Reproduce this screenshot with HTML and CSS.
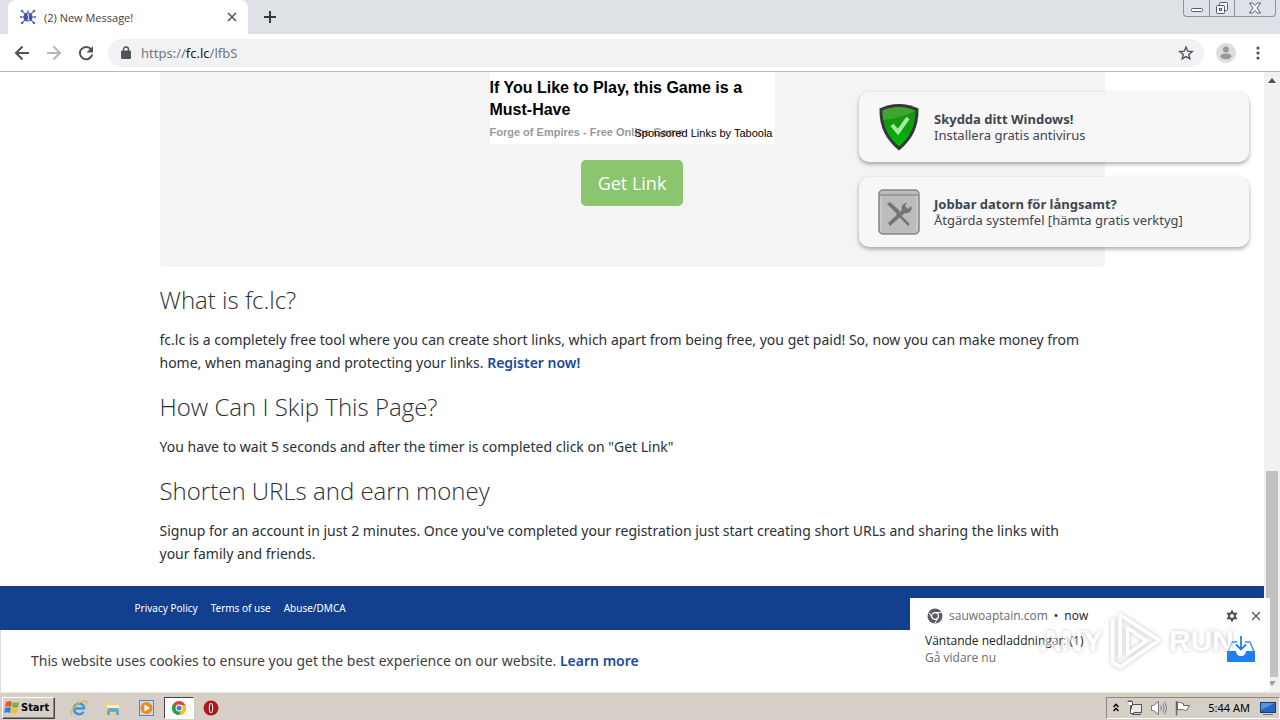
FILE: index.html
```html
<!DOCTYPE html>
<html lang="en">
<head>
  <meta charset="UTF-8">
  <title>(2) New Message!</title>
  <meta name="viewport" content="width=device-width, initial-scale=1.0">
  <link rel="stylesheet" href="styles.css">
</head>
<body>
  <header class="tab-strip">
    <div class="tab-edge"></div>
    <div class="tab">
      <svg class="favicon" width="16" height="16" viewBox="0 0 16 16">
        <g stroke="#6470b8" stroke-width="1.2"><path d="M8 8L2 2M8 8l6-6M8 8l-6 6M8 8l6 6M0 8h16M8 8V1"/></g>
        <circle cx="8" cy="8" r="4.6" fill="#4550a8"/>
        <g fill="#5a66b4"><circle cx="2" cy="2" r="1.3"/><circle cx="14" cy="2" r="1.3"/><circle cx="2" cy="14" r="1.3"/><circle cx="14" cy="14" r="1.3"/><circle cx="1" cy="8" r="1"/><circle cx="15" cy="8" r="1"/></g>
        <path d="M7 6l1.5-1v6M7 11h3" stroke="#c9cef0" stroke-width="1.2" fill="none"/>
      </svg>
      <span class="tab-title">(2) New Message!</span>
      <button class="icon-btn tab-close" aria-label="Close tab">
        <svg width="10" height="10" viewBox="0 0 10 10"><path d="M1 1l8 8M9 1l-8 8" stroke="#55595d" stroke-width="1.7"/></svg>
      </button>
    </div>
    <button class="icon-btn new-tab" aria-label="New tab">
      <svg width="12" height="12" viewBox="0 0 12 12"><path d="M6 0v12M0 6h12" stroke="#35383d" stroke-width="2"/></svg>
    </button>
    <div class="window-buttons">
      <button aria-label="Minimize">
        <svg width="14" height="14" viewBox="0 0 14 14"><rect x="1.5" y="7.5" width="11" height="3" rx="1" fill="#fff" stroke="#555a66"/></svg>
      </button>
      <button aria-label="Restore">
        <svg width="14" height="14" viewBox="0 0 14 14" fill="#f4f5f8" stroke="#555a66"><rect x="4.5" y="1.5" width="8" height="8" rx="1"/><rect x="1.5" y="4.5" width="8" height="8" rx="1"/><rect x="4.5" y="7.5" width="2" height="2"/></svg>
      </button>
      <button class="wide" aria-label="Close">
        <svg width="12" height="12" viewBox="0 0 12 12" fill="#fff" stroke="#555a66"><path d="M.5 1h3L6 3.6 8.5 1h3L8 6l3.5 5h-3L6 8.4 3.5 11h-3L4 6z"/></svg>
      </button>
    </div>
  </header>

  <nav class="toolbar">
    <button class="icon-btn" aria-label="Back">
      <svg width="16" height="16" viewBox="0 0 16 16" fill="none" stroke="#505357" stroke-width="2"><path d="M15 8H2M8.5 1.5L2 8l6.5 6.5"/></svg>
    </button>
    <button class="icon-btn" aria-label="Forward">
      <svg width="16" height="16" viewBox="0 0 16 16" fill="none" stroke="#b4b6b9" stroke-width="2"><path d="M1 8h13M7.5 1.5L14 8l-6.5 6.5"/></svg>
    </button>
    <button class="icon-btn" aria-label="Reload">
      <svg width="16" height="16" viewBox="0 0 16 16"><path d="M13.2 4.5A6.2 6.2 0 1 0 14.2 9.5" fill="none" stroke="#505357" stroke-width="2"/><path d="M15 1v6.5H8.5z" fill="#505357"/></svg>
    </button>
    <div class="omnibox">
      <svg width="10" height="13" viewBox="0 0 10 13"><rect y="4.5" width="10" height="8.5" rx="1.2" fill="#505357"/><path d="M2.5 5V3.5a2.5 2.5 0 0 1 5 0V5" fill="none" stroke="#505357" stroke-width="1.4"/></svg>
      <div class="url">https://<span>fc.lc</span>/lfbS</div>
      <button class="icon-btn" aria-label="Bookmark this page">
        <svg width="16" height="16" viewBox="0 0 16 16"><path d="M8 2l1.7 4.2 4.5.4-3.4 2.9 1 4.4L8 11.600l-3.800 2.300 1-4.400-3.400-2.900 4.500-.4z" fill="none" stroke="#505357" stroke-width="1.400"/></svg>
      </button>
    </div>
    <button class="icon-btn" aria-label="Profile">
      <svg width="20" height="20" viewBox="0 0 20 20"><circle cx="10" cy="10" r="10" fill="#dcdddf"/><circle cx="10" cy="6.5" r="3" fill="#96989b"/><path d="M4.5 14c0-3 3-3.500 5.500-3.500s5.500.5 5.500 3.500c-1.500 1.600-3.300 2.300-5.500 2.300S6 15.600 4.500 14z" fill="#96989b"/></svg>
    </button>
    <button class="icon-btn menu-btn" aria-label="Menu">
      <svg width="4" height="14" viewBox="0 0 4 14" fill="#505357"><circle cx="2" cy="2" r="1.6"/><circle cx="2" cy="7" r="1.6"/><circle cx="2" cy="12" r="1.6"/></svg>
    </button>
  </nav>

  <div class="viewport">
    <div class="page">
      <main class="content">
        <section class="link-box">
          <div class="ad">
            <h2>If You Like to Play, this Game is a Must-Have</h2>
            <div class="ad-source">Forge of Empires - Free Online Game</div>
            <div class="ad-sponsor">Sponsored Links by Taboola</div>
          </div>
          <button class="get-link">Get Link</button>
        </section>

        <h3>What is fc.lc?</h3>
        <p>fc.lc is a completely free tool where you can create short links, which apart from being free, you get paid! So, now you can make money from<br>home, when managing and protecting your links. <a href="#">Register now!</a></p>
        <h3>How Can I Skip This Page?</h3>
        <p>You have to wait 5 seconds and after the timer is completed click on "Get Link"</p>
        <h3>Shorten URLs and earn money</h3>
        <p>Signup for an account in just 2 minutes. Once you've completed your registration just start creating short URLs and sharing the links with<br>your family and friends.</p>
      </main>

      <footer class="footer">
        <div class="footer-links">
          <a href="#">Privacy Policy</a>
          <a href="#">Terms of use</a>
          <a href="#">Abuse/DMCA</a>
        </div>
      </footer>
      <div class="cookie-bar">This website uses cookies to ensure you get the best experience on our website. <a href="#">Learn more</a></div>
    </div>

    <div class="scrollbar">
      <svg width="8" height="5" viewBox="0 0 8 5"><path d="M0 5l4-5 4 5z" fill="#505050"/></svg>
      <div class="scroll-track"><div class="scroll-thumb"></div></div>
      <svg width="8" height="5" viewBox="0 0 8 5"><path d="M0 0l4 5 4-5z" fill="#a0a0a0"/></svg>
    </div>

    <div class="push-list">
      <div class="push">
        <svg width="42" height="48" viewBox="0 0 42 48">
          <defs>
            <linearGradient id="green" x1="0" y1="0" x2="0" y2="1"><stop offset="0" stop-color="#2b8a1c"/><stop offset=".5" stop-color="#0aa00a"/><stop offset="1" stop-color="#05b905"/></linearGradient>
          </defs>
          <path d="M21 1c7 0 14 2 19.5 4.500C41 24 34 37 21 47.500 8 37 1 24 1.500 5.500 7 3 14 1 21 1z" fill="#34383a"/>
          <path d="M21 4c6 0 12 1.500 16.500 3.500C37.500 23 32 34 21 43.500 10 34 4.500 23 4.500 7.500 9 5.500 15 4 21 4z" fill="url(#green)"/>
          <path d="M5 17C14 16 28 13 37 8 32 5 26 4 21 4 15 4 9 5.500 4.500 7.500z" fill="#6cc05c" opacity=".4"/>
          <path d="M14 22l6 7 10-14" fill="none" stroke="#a9eaa0" stroke-width="4"/>
        </svg>
        <div class="push-text"><strong>Skydda ditt Windows!</strong><span>Installera gratis antivirus</span></div>
      </div>
      <div class="push">
        <svg width="42" height="48" viewBox="0 0 42 48">
          <rect x="1" y="2" width="40" height="44" rx="4" fill="#bcbcbc" stroke="#858585" stroke-width="1.5"/>
          <path d="M2 7h38" stroke="#929292" stroke-width="1.5"/>
          <path d="M3 8v35M39 8v35" stroke="#d6d6d6"/>
          <path d="M19 25l12 12" stroke="#747474" stroke-width="2.5"/>
          <path d="M9 16l3-2 10 9-3 3z" fill="#747474"/>
          <path d="M29 15a5 5 0 0 0-5 7L10 35l2 3 15-13a5 5 0 0 0 6-7l-3 3-3-3z" fill="#747474"/>
        </svg>
        <div class="push-text"><strong>Jobbar datorn för långsamt?</strong><span>Åtgärda systemfel [hämta gratis verktyg]</span></div>
      </div>
    </div>

    <div class="toast">
      <div class="toast-head">
        <svg width="16" height="16" viewBox="0 0 16 16"><circle cx="8" cy="8" r="7.5" fill="#5a5e63"/><circle cx="8" cy="8" r="3.4" fill="none" stroke="#fff" stroke-width="1.2"/><path d="M8 4.6h6.500M5 9.700L2 4.500M11 9.700L8 15" stroke="#fff" stroke-width="1"/></svg>
        <span class="toast-site">sauwoaptain.com</span>
        <span>•</span>
        <span>now</span>
        <button class="icon-btn toast-settings" aria-label="Notification settings">
          <svg width="12" height="12" viewBox="0 0 12 12"><circle cx="6" cy="6" r="3" fill="none" stroke="#505357" stroke-width="2.2"/><path d="M6 .5v2M6 9.500v2M1.200 3.300l1.700 1M9.100 7.700l1.700 1M1.200 8.700l1.700-1M9.100 4.300l1.700-1" stroke="#505357" stroke-width="2.2"/></svg>
        </button>
        <button class="icon-btn" aria-label="Dismiss">
          <svg width="10" height="10" viewBox="0 0 10 10"><path d="M1 1l8 8M9 1l-8 8" stroke="#505357" stroke-width="1.3"/></svg>
        </button>
      </div>
      <div class="toast-body">
        <div>
          <div>Väntande nedladdningar: (1)</div>
          <div class="toast-sub">Gå vidare nu</div>
        </div>
        <svg width="28" height="26" viewBox="0 0 28 26"><path d="M5 6L1 16M23 6l4 10M5 6h5M18 6h5" fill="none" stroke="#3d8fef" stroke-width="1.5"/><path d="M0 15h9c0 3 2 5 5 5s5-2 5-5h9v11H0z" fill="#1f7ff0"/><path d="M14 0v13M9 8.500l5 5 5-5" fill="none" stroke="#1f7ff0" stroke-width="1.8"/></svg>
      </div>
    </div>

    <div class="watermark">
      <span>ANY</span>
      <svg width="54" height="62" viewBox="0 0 58 64" fill="none" stroke="#fff" stroke-width="4" stroke-linejoin="round"><path d="M12 50V4l42 27-42 29L4 55V8"/><path d="M20 18v28l20-14z"/></svg>
      <span>RUN</span>
    </div>
  </div>

  <div class="taskbar">
    <button class="start">
      <svg width="17" height="16" viewBox="0 0 17 16"><path d="M3 2c2-1 4-1 6 0L8 7C6 6 4 6 2 7z" fill="#e4572c"/><path d="M10 2c2 1 4 1 6 0l-1 5c-2 1-4 1-6 0z" fill="#6fb43c"/><path d="M2 8c2-1 4-1 6 0l-1 5c-2-1-4-1-6 0z" fill="#3a80c8"/><path d="M9 8c2 1 4 1 6 0l-1 5c-2 1-4 1-6 0z" fill="#f4c030"/></svg>
      Start
    </button>
    <button class="task" aria-label="Internet Explorer">
      <svg width="18" height="18" viewBox="0 0 18 18" fill="none"><path d="M14.5 9.500H4.500M14.500 9.500A5.300 5.300 0 1 0 13.500 13" stroke="#3a9ad9" stroke-width="2.6"/><path d="M2 16C-1 12 8 2 16 2c1.500.5 1 2.500 0 4" stroke="#e3b64a" stroke-width="1.3"/></svg>
    </button>
    <button class="task" aria-label="Explorer">
      <svg width="18" height="18" viewBox="0 0 18 18"><path d="M2 3h6l1 2h7v11H2z" fill="#eed27c"/><path d="M3 6h12v3H3z" fill="#fbf0bf"/><path d="M3 16v-4c0-2 1-3 3-3h6c2 0 3 1 3 3v4h-3v-3H6v3z" fill="#62aad8"/></svg>
    </button>
    <button class="task" aria-label="Media Player">
      <svg width="18" height="18" viewBox="0 0 18 18"><rect x="1.5" y="1.5" width="14" height="15" fill="#c5dbef" stroke="#5289bd"/><circle cx="8.5" cy="9" r="6" fill="#f08a1d"/><path d="M6.500 5.500l5.500 3.500-5.500 3.500z" fill="#fff"/></svg>
    </button>
    <button class="task active" aria-label="Chrome">
      <svg width="14" height="14" viewBox="0 0 14 14"><circle cx="7" cy="7" r="7" fill="#e34133"/><path d="M7 7L.9 3.500A7 7 0 0 0 7 14z" fill="#2a9d4f"/><path d="M7 7h3L7 14a7 7 0 0 0 6.300-10H7z" fill="#f6c324"/><circle cx="7" cy="7" r="3.4" fill="#fff"/><circle cx="7" cy="7" r="2.5" fill="#3f7fe0"/></svg>
    </button>
    <button class="task" aria-label="Opera">
      <svg width="16" height="16" viewBox="0 0 16 16"><circle cx="8" cy="8" r="7.5" fill="#b3161b"/><ellipse cx="8" cy="8" rx="2.2" ry="5" fill="#fff"/><ellipse cx="8" cy="8" rx="1" ry="4.2" fill="#8d1014"/></svg>
    </button>
    <div class="tray">
      <svg width="6" height="9" viewBox="0 0 6 9" fill="none" stroke="#000" stroke-width="1.4"><path d="M.5 4L3 1.200 5.500 4M.5 8L3 5.200 5.500 8"/></svg>
      <svg width="17" height="16" viewBox="0 0 17 16"><rect x="5.5" y="4.5" width="10" height="8" fill="#e9e9e6" stroke="#555"/><path d="M6 14.500h9" stroke="#555"/><path d="M1.500 1.500h5v4h-2v8H8M3 0v2M5 0v2" fill="#fff" stroke="#555"/></svg>
      <svg width="17" height="16" viewBox="0 0 17 16" fill="none" stroke="#777"><path d="M1.500 5.500h2L8.500 1.500v13L3.500 10.500h-2z" fill="#fff"/><path d="M10.500 5.500c1 1.500 1 3.500 0 5M12.500 3.500c2 3 2 6 0 9M14.500 2c2.500 4 2.500 8 0 12"/></svg>
      <svg width="17" height="16" viewBox="0 0 17 16"><path d="M2.500 1v14.500" stroke="#666" stroke-width="1.5"/><path d="M3.500 2.500c3-1 4 1 6 1v2h6c-1 2-2 3-3 5-2 0-2-1-4-1s-3 0-5 .5z" fill="#fff" stroke="#666"/></svg>
      <time class="clock">5:44 AM</time>
      <svg width="16" height="14" viewBox="0 0 16 14"><rect x=".5" y="1.5" width="15" height="10" fill="#2465bd" stroke="#173f7c"/><path d="M1 2h14L1 9z" fill="#5593df"/><path d="M3 13.500h10" stroke="#67758c"/></svg>
    </div>
  </div>
</body>
</html>
```

FILE: styles.css
```css
* {
  box-sizing: border-box;
}

body {
  margin: 0;
  height: 100vh;
  display: flex;
  flex-direction: column;
  overflow: hidden;
  font-family: "Open Sans", sans-serif;
  color: #2b2f36;
  background: #fff;
}

button {
  margin: 0;
  padding: 0;
  border: none;
  background: none;
  font-family: inherit;
}

svg {
  display: block;
  flex-shrink: 0;
}

a {
  color: #1a4a9c;
  font-weight: 600;
  text-decoration: none;
}

.icon-btn {
  display: flex;
  align-items: center;
  justify-content: center;
}

/* browser chrome */
.tab-strip {
  display: flex;
  height: 34px;
  background: #dee1e6;
}

.tab-edge {
  width: 8px;
}

.tab {
  width: 240px;
  display: flex;
  align-items: center;
  gap: 8px;
  padding: 0 11px 0 12px;
  background: #fff;
  border-radius: 8px 8px 0 0;
}

.tab-title {
  flex: 1;
  font: 11px "Open Sans", sans-serif;
  color: #3c4043;
}

.new-tab {
  width: 44px;
}

.window-buttons {
  display: flex;
  height: 17px;
  margin-left: auto;
  margin-right: 4px;
  border: 1px solid #8d919c;
  border-top: none;
  border-radius: 0 0 4px 4px;
}

.window-buttons button {
  width: 25px;
  display: flex;
  justify-content: center;
  align-items: center;
}

.window-buttons button + button {
  border-left: 1px solid #8d919c;
}

.window-buttons .wide {
  width: 41px;
}

.toolbar {
  display: flex;
  align-items: center;
  gap: 16px;
  height: 38px;
  padding: 0 20px 0 14px;
  border-bottom: 1px solid #b6b8b8;
}

.omnibox {
  flex: 1;
  display: flex;
  align-items: center;
  gap: 10px;
  height: 28px;
  margin: 0 -4px 0 -2px;
  padding: 0 10px 0 13px;
  border-radius: 14px;
  background: #f0f2f4;
}

.toolbar .menu-btn {
  margin-left: 4px;
}

.url {
  flex: 1;
  font: 13px "Noto Sans", sans-serif;
  color: #73777c;
}

.url span {
  color: #202124;
}

/* page */
.viewport {
  position: relative;
  flex: 1;
  min-height: 0;
  display: flex;
}

.page {
  flex: 1;
  display: flex;
  flex-direction: column;
}

.content {
  width: 100%;
  max-width: 945px;
  margin: 0 auto;
  padding-bottom: 21px;
}

.link-box {
  display: flex;
  flex-direction: column;
  align-items: center;
  gap: 16px;
  padding-bottom: 61px;
  background: #f4f4f4;
  border-radius: 0 0 4px 4px;
}

.ad {
  position: relative;
  width: 285px;
  height: 72px;
  padding-top: 5px;
  background: #fff;
  font-family: "Liberation Sans", sans-serif;
}

.ad h2 {
  margin: 0 0 3px;
  font-size: 16px;
  line-height: 22px;
  color: #000;
}

.ad-source {
  font-size: 11px;
  font-weight: bold;
  line-height: 16px;
  color: #999;
}

.ad-sponsor {
  position: absolute;
  right: 2px;
  bottom: 3px;
  font-size: 11px;
  line-height: 16px;
  color: #000;
}

.get-link {
  width: 102px;
  height: 46px;
  border-radius: 5px;
  background: #8bc56d;
  color: #fff;
  font-size: 18px;
}

h3 {
  margin: 20px 0 15px;
  font-size: 24px;
  font-weight: 300;
  line-height: 26px;
}

p {
  margin: 0;
  font: 14px/23px "Noto Sans", sans-serif;
}

.footer {
  padding: 11px 0;
  background: #12408f;
}

.footer-links {
  display: flex;
  gap: 13px;
  max-width: 995px;
  margin: 0 auto;
  font: 10px/22px "Noto Sans", sans-serif;
}

.footer-links a {
  color: #fff;
  font-weight: 400;
}

.cookie-bar {
  flex: 1;
  padding: 19px 30px;
  border-left: 1px solid #ddd;
  font: 14px/23px "Noto Sans", sans-serif;
  color: #404040;
}

.scrollbar {
  width: 16px;
  display: flex;
  flex-direction: column;
  align-items: center;
  gap: 4px;
  padding: 6px 0;
  background: #f1f1f1;
}

.scroll-track {
  flex: 1;
  width: 12px;
  display: flex;
  align-items: flex-end;
}

.scroll-thumb {
  width: 100%;
  height: 35%;
  background: #c1c1c1;
}

/* in-page push messages */
.push-list {
  position: absolute;
  top: 20px;
  right: 31px;
  width: 390px;
  display: flex;
  flex-direction: column;
  gap: 15px;
}

.push {
  display: flex;
  align-items: center;
  gap: 14px;
  height: 70px;
  padding: 0 19px;
  border-radius: 10px;
  background: #f7f7f7;
  box-shadow: 0 2px 4px rgba(0, 0, 0, 0.35);
}

.push-text {
  font: 13px/16px "Noto Sans", sans-serif;
  color: #3e4650;
}

.push-text strong,
.push-text span {
  display: block;
}

/* desktop notification */
.toast {
  position: absolute;
  right: 10px;
  bottom: 2px;
  width: 360px;
  height: 92px;
  background: #fff;
  font: 12px/17px "Open Sans", sans-serif;
  color: #202124;
}

.toast-head {
  display: flex;
  align-items: center;
  gap: 6px;
  padding: 9px 9px 0 17px;
}

.toast-site,
.toast-sub {
  color: #6a6d71;
}

.toast-settings {
  margin-left: auto;
  margin-right: 7px;
}

.toast-body {
  display: flex;
  justify-content: space-between;
  align-items: center;
  padding: 8px 15px;
}

.watermark {
  position: absolute;
  right: 46px;
  bottom: 20px;
  display: flex;
  align-items: center;
  gap: 6px;
  font: bold 30px "Liberation Sans", sans-serif;
  color: #fff;
  opacity: 0.5;
  filter: drop-shadow(0 0 2px #888);
}

/* taskbar */
.taskbar {
  display: flex;
  align-items: center;
  height: 28px;
  padding: 2px 0 0 2px;
  background: #d5cfc7;
  border-top: 1px solid #ece9e4;
}

.start {
  display: flex;
  align-items: center;
  gap: 1px;
  width: 53px;
  height: 22px;
  margin-right: 7px;
  border: 1px solid;
  border-color: #fff #45423e #45423e #fff;
  box-shadow: inset -1px -1px #8b8781;
  font: bold 11px "DejaVu Sans Condensed", "Noto Sans", sans-serif;
  color: #000;
}

.task {
  display: flex;
  align-items: center;
  justify-content: center;
  width: 30px;
  height: 22px;
  margin: 0 2px;
}

.task.active {
  margin: 0;
  background: #fff;
  border: 1px solid;
  border-color: #45423e #fff #fff #45423e;
}

.tray {
  display: flex;
  align-items: center;
  gap: 7px;
  height: 22px;
  margin-left: auto;
  padding: 0 3px 0 6px;
  border: 1px solid;
  border-color: #8b8781 #fff #fff #8b8781;
}

.clock {
  margin: 0 3px 0 10px;
  font: 11px "Noto Sans", sans-serif;
  color: #000;
}
```
